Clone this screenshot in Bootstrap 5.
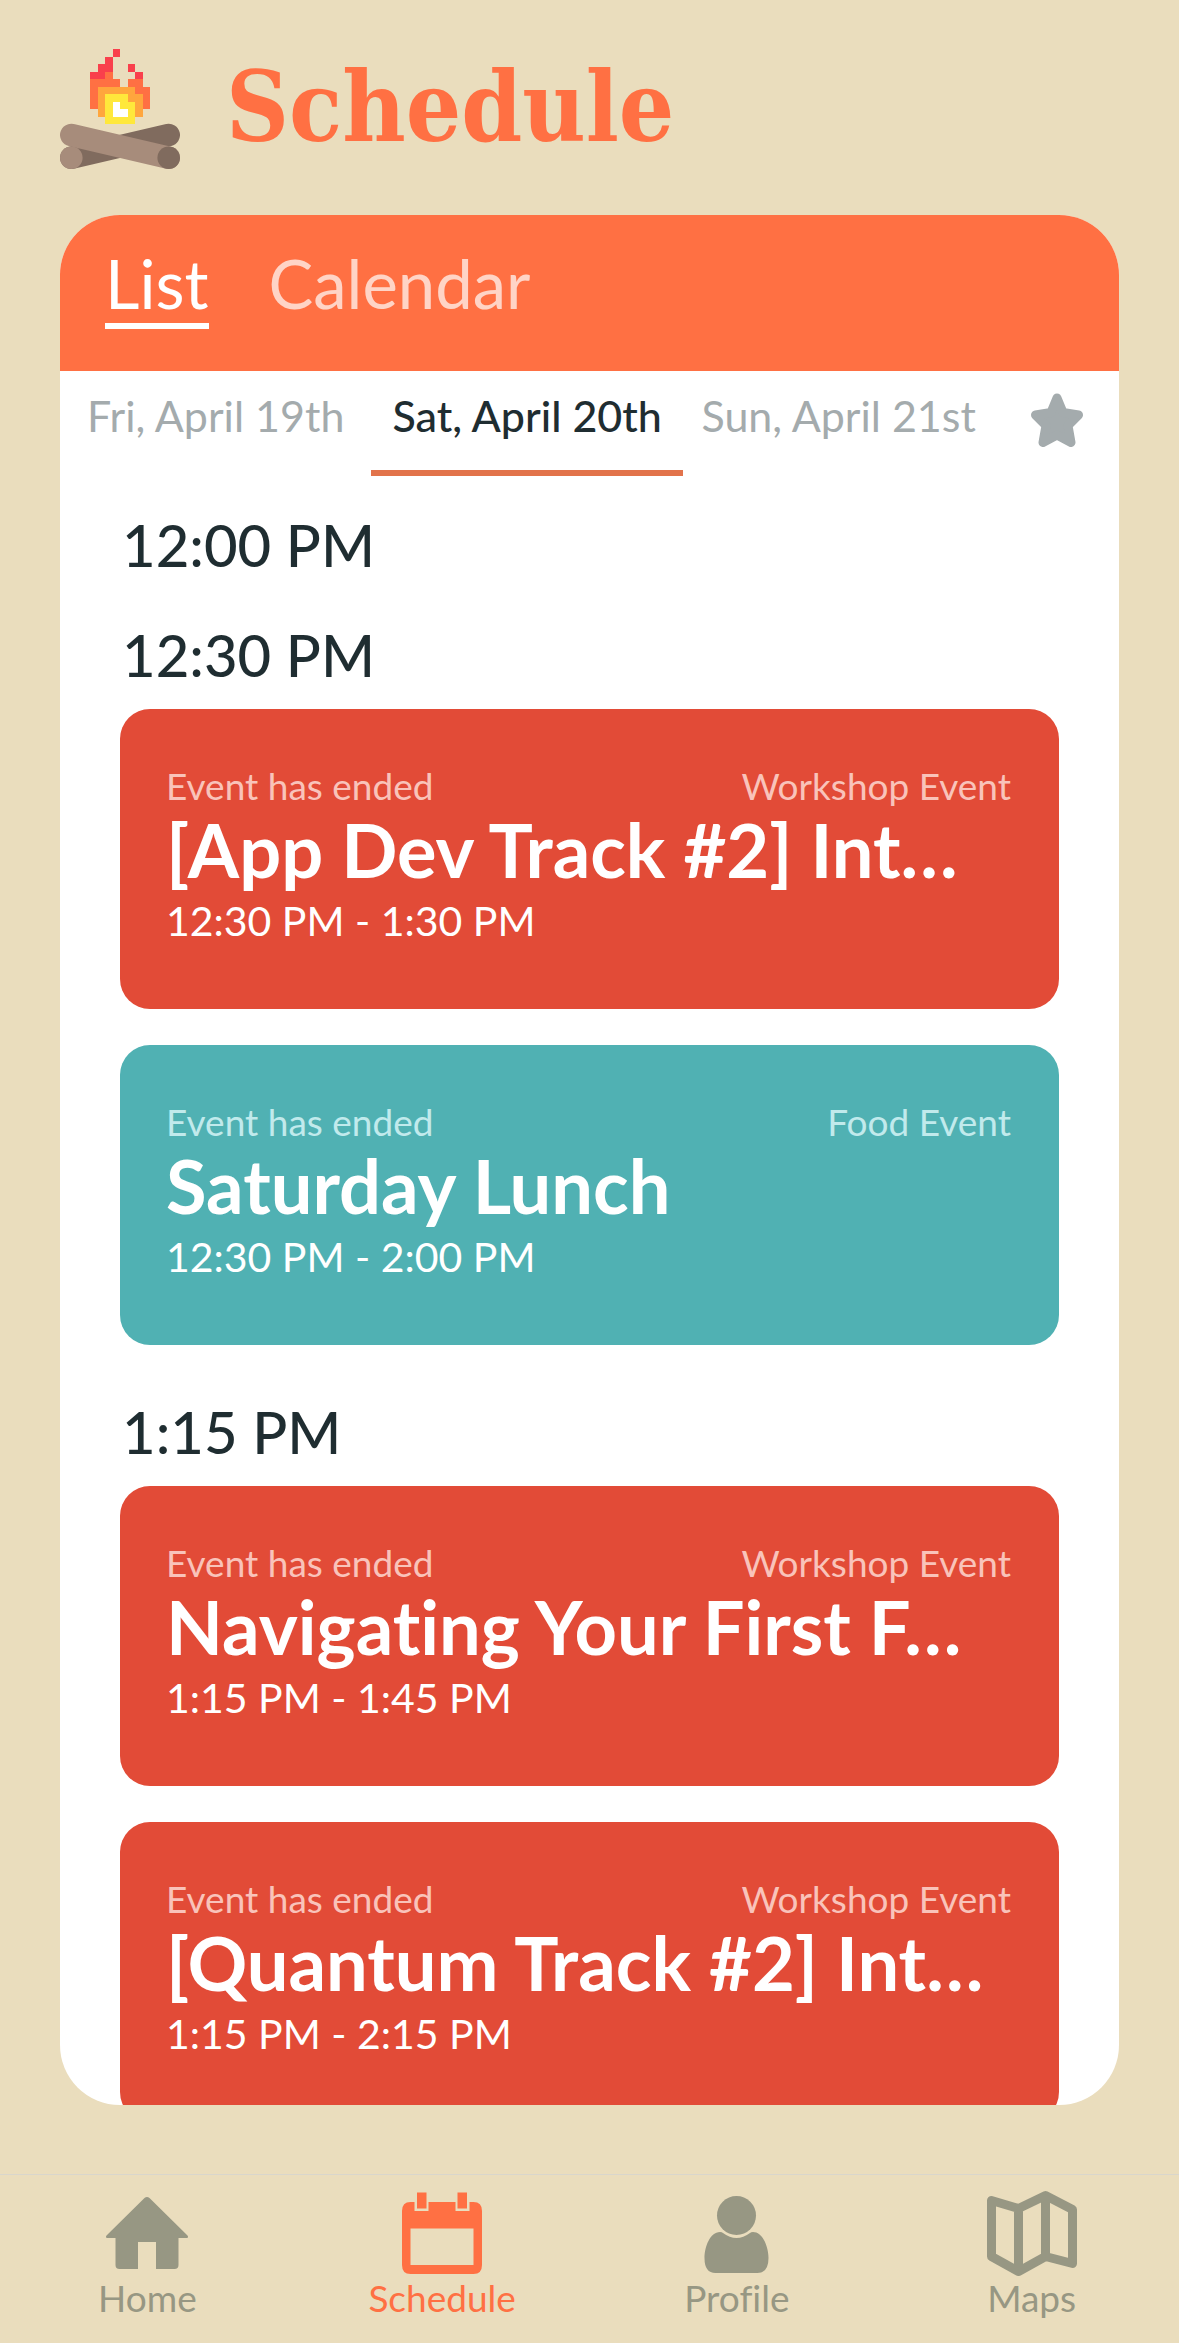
<!DOCTYPE html>
<html lang="en">
<head>
<meta charset="utf-8">
<meta name="viewport" content="width=device-width, initial-scale=1">
<title>Schedule</title>
<link href="https://cdn.jsdelivr.net/npm/bootstrap@5.3.0/dist/css/bootstrap.min.css" rel="stylesheet">
<style>
  :root { --sand:#eaddbd; --flame:#ff7043; --ink:#1f2d31; --ash:#a4abad; --stone:#979783; }
  body { background:var(--sand); color:var(--ink); font-family:Lato,"Open Sans",sans-serif; font-variant-ligatures:none; }
  .app-shell { height:100vh; }
  .app-head { padding:49px 60px 46px; gap:46px; }
  .app-logo { width:120px; height:120px; }
  .app-title { font-family:"DejaVu Serif Condensed","DejaVu Serif",serif; font-weight:700; font-size:97px; line-height:106px; padding-bottom:4px; color:var(--flame); }
  .panel { margin:0 60px 69px; border-radius:60px; min-height:0; }
  .view-tabs { background:var(--flame); padding:28px 45px 42px; gap:60px; }
  .view-tab { font-size:67px; line-height:80px; padding:0; border:0; border-bottom:6px solid transparent; background:none; color:#ffd4c6; }
  .view-tab.active { color:#fff; border-color:#fff; }
  .day-tab { flex:5 1 0; font-size:43px; line-height:50px; padding:20px 0 29px; border:0; border-bottom:6px solid transparent; background:none; color:var(--ash); white-space:nowrap; }
  .day-tab.active { color:var(--ink); border-color:#e2734b; font-weight:500; }
  .star-tab { flex:2 1 0; padding:0 0 8px; border:0; background:none; color:var(--ash); }
  .star-tab svg { width:54px; height:60px; }
  .agenda { padding:18px 60px 0; overflow-y:auto; scrollbar-width:none; min-height:0; }
  .agenda::-webkit-scrollbar { display:none; }
  .slot { padding-bottom:5px; }
  .slot-time { font-size:58px; line-height:72px; padding:15px 2px 18px; font-weight:500; }
  .slot-events { gap:36px; padding-bottom:31px; }
  .event { padding:59px 48px 63px 46px; border-radius:30px; color:#fff; }
  .event-workshop { background:#e24b37; }
  .event-workshop .event-meta { color:#f9c3ba; }
  .event-food { background:#50b1b3; }
  .event-food .event-meta { color:#c1eaec; }
  .event-meta { font-size:37px; line-height:36px; }
  .event-name { font-size:74px; line-height:84px; font-weight:700; margin-top:4px; white-space:nowrap; }
  .event-hours { font-size:41px; line-height:50px; margin-top:4px; }
  .tab-bar { border-top:1px solid #d9d6cc; padding:11px 0 23px; }
  .tab-link { color:var(--stone); font-size:37px; line-height:44px; text-decoration:none; }
  .tab-link.active { color:var(--flame); }
  .tab-link svg { width:90px; height:90px; }
</style>
</head>
<body>
<div class="app-shell d-flex flex-column">
  <header class="app-head d-flex align-items-center">
    <svg class="app-logo flex-shrink-0" viewBox="0 0 120 120" aria-hidden="true">
      <path d="M108.7 86 11.3 108.7" stroke="#806b5e" stroke-width="22.6" stroke-linecap="round"/>
      <circle cx="11.3" cy="108.7" r="11.3" fill="#a78c7b"/>
      <path d="M11.3 86 108.7 108.7" stroke="#a78c7b" stroke-width="22.6" stroke-linecap="round"/>
      <circle cx="108.7" cy="108.7" r="11.3" fill="#806b5e"/>
      <g transform="translate(30 0) scale(7.5)" shape-rendering="crispEdges">
        <path fill="#f9404c" d="M3 0h1v1H3zM2 1h1v2H1V2h1zM5 2h1v1H5zM6 3h1v1H6zM0 3h2v1H0z"/>
        <path fill="#ff7043" d="M2 3h1v1h1v1H1v3H0V4h2zM5 4h2v1h1v3H6V5H5z"/>
        <path fill="#ffa63d" d="M1 5h5v1h1v3H6V7H5V6H2v3H1z"/>
        <path fill="#ffe83b" d="M2 6h3v1h1v3H2z"/>
        <path fill="#fff" d="M3 7h1v1h1v1H3z"/>
      </g>
    </svg>
    <h1 class="app-title m-0">Schedule</h1>
  </header>

  <main class="panel bg-white d-flex flex-column flex-grow-1 overflow-hidden">
    <div class="view-tabs d-flex flex-shrink-0" role="tablist" aria-label="View">
      <button type="button" class="view-tab active" role="tab" aria-selected="true">List</button>
      <button type="button" class="view-tab" role="tab" aria-selected="false">Calendar</button>
    </div>
    <div class="d-flex flex-shrink-0" role="tablist" aria-label="Day">
      <button type="button" class="day-tab" role="tab" aria-selected="false">Fri, April 19th</button>
      <button type="button" class="day-tab active" role="tab" aria-selected="true">Sat, April 20th</button>
      <button type="button" class="day-tab" role="tab" aria-selected="false">Sun, April 21st</button>
      <button type="button" class="star-tab d-flex align-items-center justify-content-center" role="tab" aria-selected="false" aria-label="Starred events">
        <svg viewBox="0 0 54 60" fill="currentColor" stroke="currentColor" stroke-width="9" stroke-linejoin="round" aria-hidden="true"><path d="M27 8 33 22.500 48.500 25 38 35.500 41 52.500 27 45 13 52.500 16 35.500 5.500 25 21 22.500Z"/></svg>
      </button>
    </div>

    <div class="agenda flex-grow-1">
      <section class="slot">
        <h2 class="slot-time m-0">12:00 PM</h2>
      </section>
      <section class="slot">
        <h2 class="slot-time m-0">12:30 PM</h2>
        <div class="slot-events d-flex flex-column">
          <article class="event event-workshop">
            <div class="event-meta d-flex justify-content-between"><span>Event has ended</span><span>Workshop Event</span></div>
            <h3 class="event-name mb-0">[App Dev Track #2] Int…</h3>
            <p class="event-hours mb-0">12:30 PM - 1:30 PM</p>
          </article>
          <article class="event event-food">
            <div class="event-meta d-flex justify-content-between"><span>Event has ended</span><span>Food Event</span></div>
            <h3 class="event-name mb-0">Saturday Lunch</h3>
            <p class="event-hours mb-0">12:30 PM - 2:00 PM</p>
          </article>
        </div>
      </section>
      <section class="slot">
        <h2 class="slot-time m-0">1:15 PM</h2>
        <div class="slot-events d-flex flex-column">
          <article class="event event-workshop">
            <div class="event-meta d-flex justify-content-between"><span>Event has ended</span><span>Workshop Event</span></div>
            <h3 class="event-name mb-0">Navigating Your First F…</h3>
            <p class="event-hours mb-0">1:15 PM - 1:45 PM</p>
          </article>
          <article class="event event-workshop">
            <div class="event-meta d-flex justify-content-between"><span>Event has ended</span><span>Workshop Event</span></div>
            <h3 class="event-name mb-0">[Quantum Track #2] Int…</h3>
            <p class="event-hours mb-0">1:15 PM - 2:15 PM</p>
          </article>
        </div>
      </section>
    </div>
  </main>

  <nav class="tab-bar d-flex flex-shrink-0" aria-label="Main">
    <a href="#home" class="tab-link col-3 d-flex flex-column align-items-center">
      <svg viewBox="0 0 90 90" fill="currentColor" aria-hidden="true"><path d="M42.500 12q2.500-2 5 0L85.500 49.500q1.500 2.500-1 2.500H76.500V79q0 4-4 4H54V56H36V83H17.500q-4 0-4-4V52H5.500q-2.500 0-1-2.500Z"/></svg>
      <span>Home</span>
    </a>
    <a href="#schedule" class="tab-link active col-3 d-flex flex-column align-items-center" aria-current="page">
      <svg viewBox="0 0 90 90" fill="currentColor" aria-hidden="true"><path fill-rule="evenodd" d="M13.500 16H17.500V25H31.500V16H58.500V25H72.500V16H76.500Q85 16 85 25V79Q85 88 76.500 88H13.500Q5 88 5 79V25Q5 16 13.500 16ZM13.500 42.500V79H76.500V42.500Z"/><path d="M20 6.500h9.500v16H20zM60.500 6.500H70v16H60.500z"/></svg>
      <span>Schedule</span>
    </a>
    <a href="#profile" class="tab-link col-3 d-flex flex-column align-items-center">
      <svg viewBox="0 0 90 90" fill="currentColor" aria-hidden="true"><ellipse cx="44.500" cy="29.500" rx="19.500" ry="19.500"/><path d="M28 46q2 0 3 1Q44.500 57 58 47q1-1 3-1C71 46 76.500 61 76.500 72q0 15-11 15H23.500Q12.500 87 12.500 72C12.500 61 18 46 28 46Z"/></svg>
      <span>Profile</span>
    </a>
    <a href="#maps" class="tab-link col-3 d-flex flex-column align-items-center">
      <svg viewBox="0 0 90 90" fill="none" stroke="currentColor" stroke-width="9" stroke-linejoin="round" aria-hidden="true"><path d="M4.500 14.500 31.500 22.500 58.500 9.500 85.500 23.500V77.500L58.500 70.500 31.500 85.500 4.500 70.500ZM31.500 22.500V85.500M58.500 9.500V70.500"/></svg>
      <span>Maps</span>
    </a>
  </nav>
</div>
<script src="https://cdn.jsdelivr.net/npm/bootstrap@5.3.0/dist/js/bootstrap.bundle.min.js"></script>
</body>
</html>
